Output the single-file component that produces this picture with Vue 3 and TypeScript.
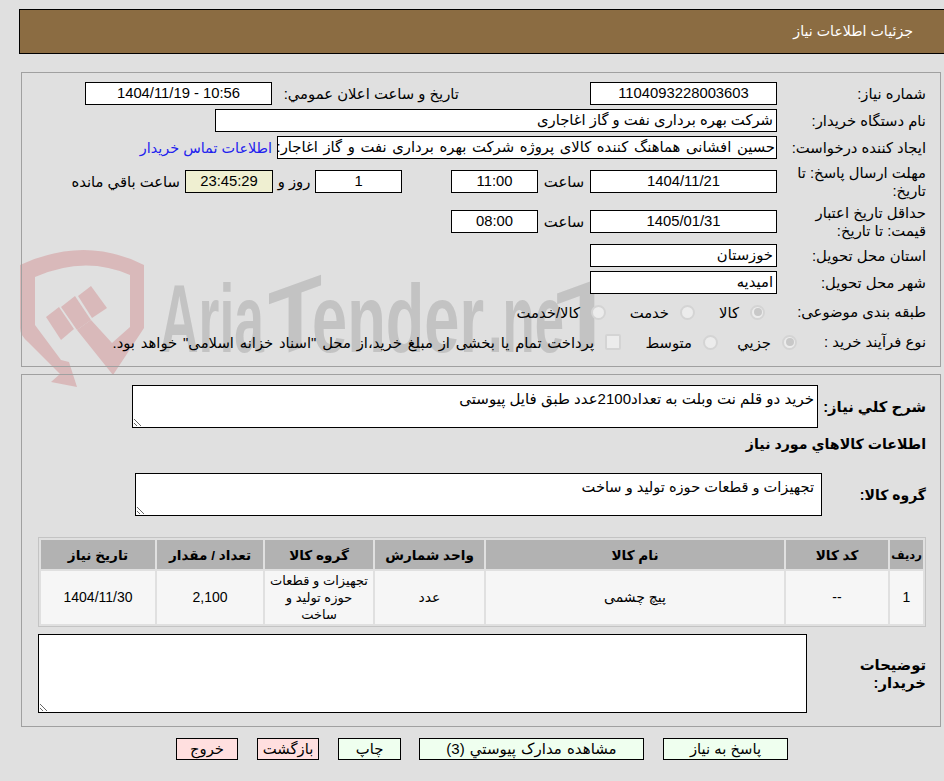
<script setup lang="ts">
interface Item {
  row: string
  code: string
  name: string
  unit: string
  group: string
  qty: string
  date: string
}
const items: Item[] = [
  { row: '1', code: '--', name: 'پیچ چشمی', unit: 'عدد', group: 'تجهیزات و قطعات حوزه تولید و ساخت', qty: '2,100', date: '1404/11/30' },
]
const columns = [
  { title: 'ردیف', width: 33 },
  { title: 'کد کالا', width: 102 },
  { title: 'نام کالا', width: 298 },
  { title: 'واحد شمارش', width: 109 },
  { title: 'گروه کالا', width: 108 },
  { title: 'تعداد / مقدار', width: 106 },
  { title: 'تاریخ نیاز', width: 114 },
]
const descText = 'خرید دو قلم نت وبلت به تعداد2100عدد طبق فایل پیوستی'
const groupText = 'تجهیزات و قطعات حوزه تولید و ساخت'
</script>

<template>
  <div class="page">
    <svg class="watermark" width="944" height="400" viewBox="0 0 944 400" aria-hidden="true">
      <g fill="#d9b9ba">
        <path d="M20 265 Q85 235 144 265 L144 328 L113 375 L77 330 L91 320 L112 343 L130 327 L130 275 Q85 255 35 277 L35 325 L61 360 L69 362 L77 387 L51 382 L60 374 L28 342 Q20 335 20 328 Z" />
        <path d="M91 286 L107 308 L92 318 L78 296 Z" />
        <path d="M75 296 L91 320 L77 330 L61 307 Z" />
        <path d="M59 307 L74 329 L61 340 L46 317 Z" />
      </g>
      <g class="wm-text">
        <text x="160" y="352" textLength="104" lengthAdjust="spacingAndGlyphs">Aria</text>
        <text transform="translate(268 360) skewY(-20)" textLength="54" lengthAdjust="spacingAndGlyphs">T</text>
        <text x="312" y="352" textLength="172" lengthAdjust="spacingAndGlyphs">ender</text>
        <text x="488" y="352" textLength="76" lengthAdjust="spacingAndGlyphs">.ne</text>
        <text transform="translate(556 360) skewY(-20)" textLength="62" lengthAdjust="spacingAndGlyphs">T</text>
      </g>
    </svg>

    <header class="title-bar">جزئیات اطلاعات نیاز</header>

    <section class="panel panel-top">
      <div class="row">
        <div class="label">شماره نیاز:</div>
        <div class="field center w187">1104093228003603</div>
        <div class="label-inline announce">تاریخ و ساعت اعلان عمومي:</div>
        <div class="field center w187 ltr">1404/11/19 - 10:56</div>
      </div>
      <div class="row">
        <div class="label">نام دستگاه خریدار:</div>
        <div class="field w562">شرکت بهره برداری نفت و گاز اغاجاری</div>
      </div>
      <div class="row">
        <div class="label">ایجاد کننده درخواست:</div>
        <div class="field w500 requester">حسین افشانی هماهنگ کننده کالای پروژه شرکت بهره برداری نفت و گاز اغاجار:</div>
        <a class="contact">اطلاعات تماس خریدار</a>
      </div>
      <div class="row gap-11">
        <div class="label">مهلت ارسال پاسخ: تا تاریخ:</div>
        <div class="field center w187">1404/11/21</div>
        <div class="unit w52">ساعت</div>
        <div class="field center w87">11:00</div>
        <div class="spacer-49"></div>
        <div class="field center w87">1</div>
        <div class="unit w42">روز و</div>
        <div class="field center w88 timer">23:45:29</div>
        <div class="unit remain">ساعت باقي مانده</div>
      </div>
      <div class="row gap-17">
        <div class="label">حداقل تاریخ اعتبار قیمت: تا تاریخ:</div>
        <div class="field center w187">1405/01/31</div>
        <div class="unit w52">ساعت</div>
        <div class="field center w87">08:00</div>
      </div>
      <div class="row gap-11">
        <div class="label">استان محل تحویل:</div>
        <div class="field w187">خوزستان</div>
      </div>
      <div class="row">
        <div class="label">شهر محل تحویل:</div>
        <div class="field w187">امیدیه</div>
      </div>
      <div class="row opts gap-8">
        <div class="label l161">طبقه بندی موضوعی:</div>
        <div class="opt w70"><span class="radio on"></span>کالا</div>
        <div class="opt w89"><span class="radio"></span>خدمت</div>
        <div class="opt"><span class="radio"></span>کالا/خدمت</div>
      </div>
      <div class="row opts gap-10">
        <div class="label l129">نوع فرآیند خرید :</div>
        <div class="opt w79"><span class="radio on"></span>جزیي</div>
        <div class="opt w97"><span class="radio"></span>متوسط</div>
        <div class="opt long"><span class="check"></span>پرداخت تمام یا بخشی از مبلغ خرید،از محل "اسناد خزانه اسلامی" خواهد بود.</div>
      </div>
    </section>

    <section class="panel panel-bottom">
      <div class="desc-row">
        <div class="bold-label">شرح کلي نیاز:</div>
        <textarea class="area area-desc" readonly :value="descText"></textarea>
      </div>
      <h2 class="sub-title">اطلاعات کالاهاي مورد نیاز</h2>
      <div class="group-row">
        <div class="bold-label group-label">گروه کالا:</div>
        <textarea class="area area-group" readonly :value="groupText"></textarea>
      </div>
      <table class="items">
        <colgroup>
          <col v-for="c in columns" :key="c.title" :style="{ width: c.width + 'px' }" />
        </colgroup>
        <thead>
          <tr>
            <th v-for="c in columns" :key="c.title">{{ c.title }}</th>
          </tr>
        </thead>
        <tbody>
          <tr v-for="it in items" :key="it.row">
            <td>{{ it.row }}</td>
            <td>{{ it.code }}</td>
            <td>{{ it.name }}</td>
            <td>{{ it.unit }}</td>
            <td class="group-cell">{{ it.group }}</td>
            <td>{{ it.qty }}</td>
            <td>{{ it.date }}</td>
          </tr>
        </tbody>
      </table>
      <div class="notes-row">
        <div class="bold-label notes-label">توضیحات خریدار:</div>
        <textarea class="area area-notes" readonly></textarea>
      </div>
    </section>

    <footer class="actions">
      <button class="btn green w125">پاسخ به نیاز</button>
      <button class="btn green w225">مشاهده مدارک پیوستي (3)</button>
      <button class="btn green w63 print">چاپ</button>
      <button class="btn pink w62">بازگشت</button>
      <button class="btn pink w62">خروج</button>
    </footer>
  </div>
</template>

<style scoped>
.page {
  position: relative;
  width: 944px;
  height: 781px;
  overflow: hidden;
  box-sizing: border-box;
  padding-top: 9px;
  direction: rtl;
  background: #e0e0e0;
  color: #000;
  font-family: "Liberation Sans", "DejaVu Sans", sans-serif;
  font-size: 14.8px;
}
.watermark {
  position: absolute;
  left: 0;
  top: 0;
}
.wm-text {
  font-family: "Liberation Sans", sans-serif;
  font-weight: 700;
  font-size: 96px;
  fill: #c3c3c3;
  direction: ltr;
}
.title-bar {
  position: relative;
  box-sizing: border-box;
  height: 45px;
  margin-left: 19px;
  padding-right: 31px;
  border: 1px solid #000;
  border-right: 0;
  background: #8b6c42;
  color: #fff;
  font-size: 14.2px;
  line-height: 43px;
}
.panel {
  position: relative;
  box-sizing: border-box;
  margin: 0 3px 0 21px;
  border: 1px solid #a0a0a0;
}
.panel-top {
  height: 295px;
  margin-top: 18px;
  padding: 9px 14px 0 0;
}
.panel-bottom {
  height: 353px;
  margin-top: 7px;
  padding: 10px 14px 0 0;
}
.row {
  display: flex;
  align-items: center;
  height: 23px;
  margin-top: 4px;
}
.row:first-child {
  margin-top: 0;
}
.gap-11 { margin-top: 11px; }
.gap-17 { margin-top: 17px; }
.gap-8 { margin-top: 8px; }
.gap-10 { margin-top: 10px; }
.label {
  flex: none;
  box-sizing: border-box;
  width: 149px;
  padding-left: 10px;
  line-height: 18px;
}
.l161 { width: 161px; }
.l129 { width: 129px; }
.label-inline {
  flex: none;
  white-space: nowrap;
}
.announce {
  width: 181px;
  margin: 0 131px 0 6px;
}
.field {
  flex: none;
  box-sizing: border-box;
  height: 23px;
  border: 1px solid #000;
  background: #fff;
  padding: 0 3px;
  line-height: 21px;
  white-space: nowrap;
  overflow: hidden;
}
.requester {
  padding: 0 1px;
  word-spacing: 1.5px;
}
.center { text-align: center; }
.ltr { direction: ltr; }
.w187 { width: 187px; }
.w562 { width: 562px; }
.w500 { width: 500px; }
.w87 { width: 87px; }
.w88 { width: 88px; }
.timer { background: #efefd1; }
.contact {
  margin-right: 5px;
  color: #2222ee;
  font-size: 14.4px;
  white-space: nowrap;
}
.unit {
  flex: none;
  text-align: center;
  white-space: nowrap;
}
.w52 { width: 52px; }
.w42 { width: 42px; }
.remain { margin-right: 5px; }
.spacer-49 {
  flex: none;
  width: 49px;
}
.opts { height: 20px; }
.opt {
  flex: none;
  display: flex;
  align-items: center;
  gap: 11px;
  white-space: nowrap;
}
.long { word-spacing: 1.7px; }
.w70 { width: 70px; }
.w89 { width: 89px; }
.w79 { width: 79px; }
.w97 { width: 97px; }
.radio {
  flex: none;
  box-sizing: border-box;
  display: flex;
  align-items: center;
  justify-content: center;
  width: 15px;
  height: 15px;
  border: 2px solid #d4d4d4;
  border-radius: 50%;
  background: #ececec;
}
.radio.on::after {
  content: "";
  width: 8px;
  height: 8px;
  border-radius: 50%;
  background: #c8c8c8;
}
.check {
  flex: none;
  box-sizing: border-box;
  width: 16px;
  height: 16px;
  border: 2px solid #d4d4d4;
  border-radius: 2px;
  background: #ececec;
}
.bold-label {
  font-weight: 700;
  line-height: 18px;
}
.desc-row {
  display: flex;
  align-items: center;
  height: 43px;
}
.desc-row .bold-label { width: 108px; }
.area {
  display: block;
  flex: none;
  box-sizing: border-box;
  margin: 0;
  border: 1px solid #000;
  border-radius: 0;
  outline: none;
  background: #fff;
  padding: 4px 3px 2px;
  font: inherit;
  color: #000;
  resize: both;
}
.area-desc {
  width: 686px;
  height: 43px;
  font-size: 15px;
}
.sub-title {
  margin: 7px 0 0;
  height: 18px;
  font-size: 14.2px;
  font-weight: 700;
  line-height: 18px;
}
.group-row {
  display: flex;
  align-items: center;
  height: 43px;
  margin-top: 20px;
}
.group-label {
  width: 104px;
  font-size: 14px;
}
.area-group {
  width: 687px;
  height: 43px;
  padding-right: 7px;
  font-size: 14.6px;
}
.items {
  width: 888px;
  margin-top: 21px;
  border: 1px solid #c4c4c4;
  border-spacing: 2px;
  border-collapse: separate;
  table-layout: fixed;
  font-size: 13px;
}
.items th {
  height: 29px;
  padding: 0;
  background: #b2b2b2;
  font-size: 13.6px;
  font-weight: 700;
}
.items th:first-child { font-size: 11.5px; }
.items td {
  height: 53px;
  padding: 0 2px;
  background: #f6f6f6;
  text-align: center;
  line-height: 17px;
  font-size: 14px;
}
.items td.group-cell { font-size: 13px; }
.notes-row {
  display: flex;
  align-items: center;
  height: 79px;
  margin-top: 7px;
}
.notes-label {
  box-sizing: border-box;
  width: 119px;
  padding-left: 50px;
}
.area-notes { width: 769px; height: 79px; }
.actions {
  position: relative;
  display: flex;
  height: 22px;
  margin: 11px 156px 0 0;
  gap: 19px;
}
.btn {
  flex: none;
  box-sizing: border-box;
  height: 22px;
  margin: 0;
  padding: 0;
  border: 1px solid #000;
  border-radius: 0;
  color: #000;
  font: inherit;
  line-height: 20px;
}
.w225 {
  font-size: 15px;
  word-spacing: 1px;
}
.print { margin-right: -1px; }
.green { background: #efffef; }
.pink { background: #ffdfdf; }
.w125 { width: 125px; }
.w225 { width: 225px; }
.w63 { width: 63px; }
.w62 { width: 62px; }
</style>

<style>
html, body {
  margin: 0;
  background: #e0e0e0;
}
</style>
